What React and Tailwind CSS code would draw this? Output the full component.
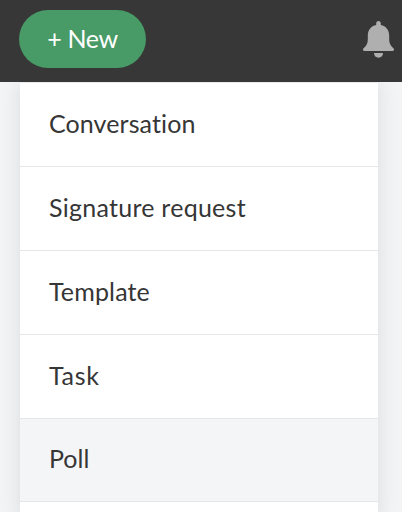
const items = [
  { label: "Conversation", row: "h-[84px]", text: "tracking-[0.1px]" },
  { label: "Signature request", row: "h-[84px]", text: "tracking-[0.26px]" },
  { label: "Template", row: "h-[84px]", text: "tracking-[0.15px]" },
  { label: "Task", row: "h-[84px]", text: "tracking-[0.7px]" },
  { label: "Poll", row: "h-[83px] bg-[#f4f5f7]", text: "tracking-normal" },
];

function Bell() {
  return (
    <svg width="32" height="37" viewBox="0 0 32 37" fill="#afafaf" aria-hidden="true">
      <path d="M15.5 0C14.1 0 13.2 1 13.2 2.3V4C8 5 4.8 9.2 4.8 14.5V18.5C4.8 22 3.7 24.3 1.1 26.8C.2 27.7 0 28.2 0 28.8C0 29.5.5 30 1.3 30H29.7C30.5 30 31 29.5 31 28.8C31 28.2 30.8 27.7 29.9 26.8C27.3 24.3 26.2 22 26.2 18.5V14.5C26.2 9.2 23 5 17.8 4V2.3C17.8 1 16.9 0 15.5 0Z" />
      <path d="M11 32H20C20 34.8 18 36.7 15.5 36.7S11 34.8 11 32Z" />
    </svg>
  );
}

export default function App() {
  return (
    <div className="flex h-[512px] w-[402px] flex-col overflow-hidden bg-[#f3f4f6] font-[Lato,sans-serif] text-[25px] leading-[30px] text-[#363636]">
      <header className="z-10 flex h-[82px] shrink-0 items-start justify-between bg-[#373737] pl-[19px] pr-[7px]">
        <button className="mt-[10px] flex h-[58px] w-[127px] items-center justify-center rounded-full bg-[#489a66] pb-[2px] text-white">
          <span className="whitespace-nowrap tracking-[-0.4px]">+ New</span>
        </button>
        <div className="mt-[21px]">
          <Bell />
        </div>
      </header>
      <nav className="ml-5 h-[440px] w-[358px] shrink-0 border-t border-[#e9eaeb] bg-white shadow-[0_0_20px_rgba(0,0,0,0.1)]">
        {items.map((item) => (
          <div key={item.label} className={`flex items-center border-b border-[#e5e6e7] pb-[4px] pl-[29px] ${item.row}`}>
            <span className={`whitespace-nowrap ${item.text}`}>{item.label}</span>
          </div>
        ))}
      </nav>
    </div>
  );
}
